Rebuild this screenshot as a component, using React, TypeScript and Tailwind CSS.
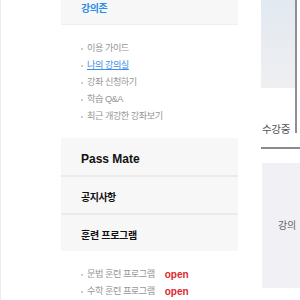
export default function App() {
  const ff = "font-['Liberation_Sans','Noto_Sans_CJK_KR',sans-serif]";
  const top = [
    { t: "이용 가이드" },
    { t: "나의 강의실", link: true },
    { t: "강좌 신청하기" },
    { t: "학습 Q&A" },
    { t: "최근 개강한 강좌보기" },
  ];
  const bottom = ["문법 훈련 프로그램", "수학 훈련 프로그램"];
  return (
    <div className={`w-[300px] h-[300px] overflow-hidden bg-white flex ${ff}`}>
      <div className="w-[61px] shrink-0 border-l border-[#ececec]" />
      <div className="w-[177px] shrink-0 flex flex-col">
        <div className="h-[26px] bg-[#f7f7f7] border-b border-[#efefef] pl-[20px]">
          <span className="block leading-[17px] text-[10px] font-bold tracking-[-0.5px] text-[#2a8de6]">
            강의존
          </span>
        </div>
        <ul className="pt-[15px] pb-[13px] pl-[20px]">
          {top.map((it) => (
            <li key={it.t} className="flex items-center gap-[4px] h-[17px] text-[9.2px] tracking-[-0.5px]">
              <span className="w-[2px] h-[2px] rounded-full bg-[#bdbdbd]" />
              <span className={it.link ? "text-[#3a8ee6] underline" : "text-[#969696]"}>{it.t}</span>
            </li>
          ))}
        </ul>
        <div className="h-[40px] bg-[#f7f7f7] border-b-2 border-[#ebebeb] pl-[20px] pt-[4px] flex items-center">
          <span className="text-[12px] font-bold text-[#111]">Pass Mate</span>
        </div>
        <div className="h-[39px] bg-[#f7f7f7] border-b-2 border-[#ebebeb] pl-[20px] pt-[5px] flex items-center">
          <span className="text-[10px] font-bold tracking-[-0.5px] text-[#111]">공지사항</span>
        </div>
        <div className="h-[37px] bg-[#f7f7f7] pl-[20px] pt-[4px] flex items-center">
          <span className="text-[10px] font-bold tracking-[-0.3px] text-[#111]">훈련 프로그램</span>
        </div>
        <ul className="pt-[15px] pl-[20px]">
          {bottom.map((t) => (
            <li key={t} className="flex items-center gap-[4px] h-[17px] text-[9.2px] tracking-[-0.5px]">
              <span className="w-[2px] h-[2px] rounded-full bg-[#bdbdbd]" />
              <span className="text-[#969696]">{t}</span>
              <span className="ml-[6px] text-[10px] font-bold tracking-normal text-[#e0262e]">open</span>
            </li>
          ))}
        </ul>
      </div>
      <div className="w-[23px] shrink-0" />
      <div className="w-[200px] shrink-0 relative flex flex-col">
        <div className="w-[34px] h-[88px] bg-gradient-to-b from-[#e2e9f1] to-[#efeff1]" />
        <div className="mt-[33px] h-[16px] leading-[16px] pl-[1px] text-[10.5px] text-[#555] tracking-[-0.3px]">
          수강중 <span className="ml-[2px]">.</span>
        </div>
        <div className="mt-[10px] h-[2px] bg-[#8c8c8c]" />
        <div className="mt-[14px] ml-[1px] h-[125px] bg-[#f1f1f5] flex items-center pl-[16px]">
          <span className="text-[10px] text-[#666] tracking-[-0.3px]">강의</span>
        </div>
        <div className="absolute left-[34px] top-0 w-[2px] h-[133px] bg-[#8f8f8f]" />
      </div>
    </div>
  );
}
